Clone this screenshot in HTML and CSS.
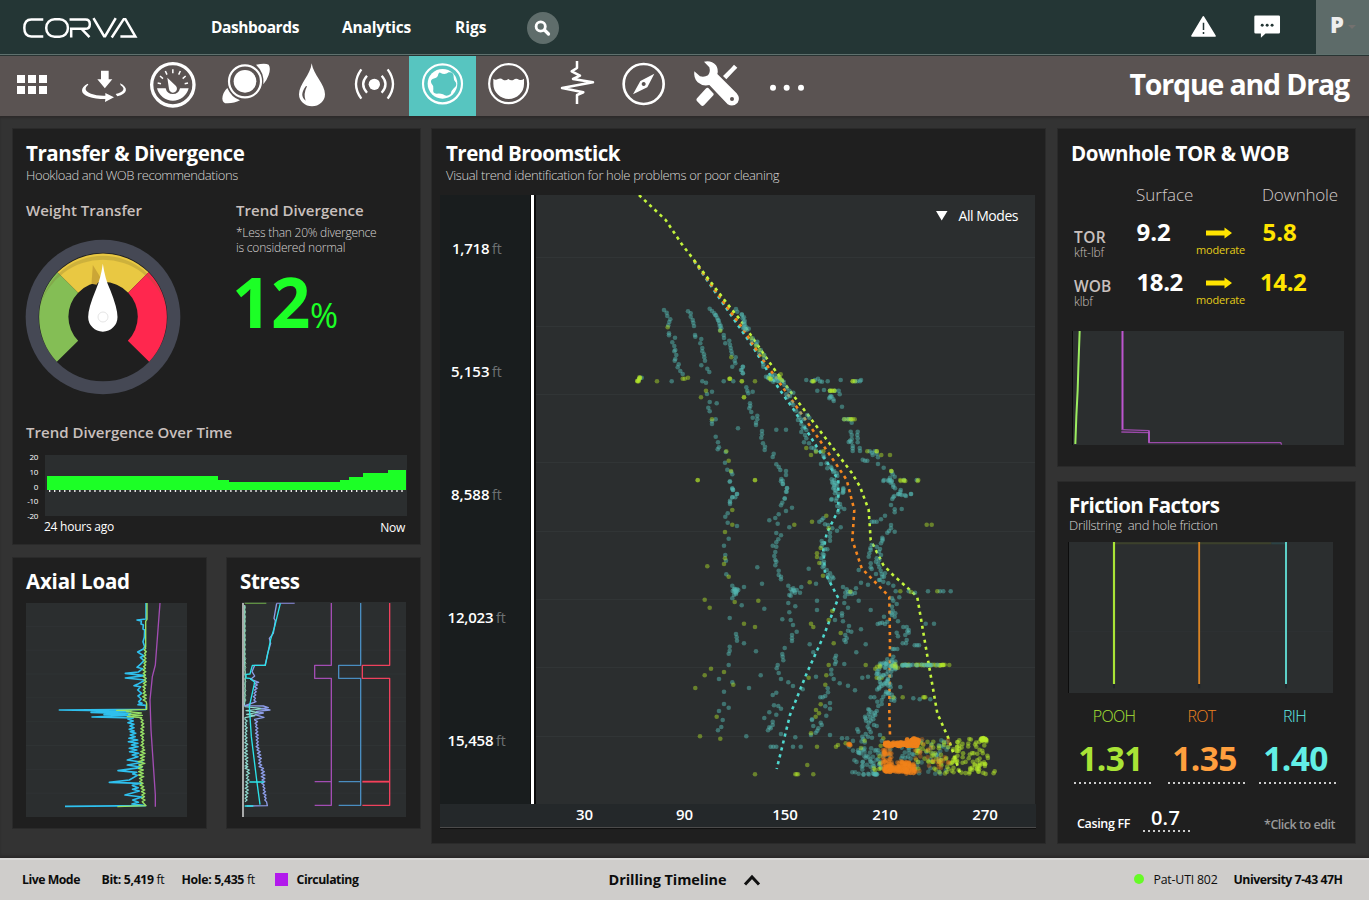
FILE: index.html
```html
<!DOCTYPE html>
<html lang="en">
<head>
<meta charset="utf-8">
<title>Corva – Torque and Drag</title>
<link rel="stylesheet" href="styles.css">
</head>
<body>
<header class="topbar">
  <svg class="logo" viewBox="66 48 352 68" role="img" aria-label="Corva" fill="none" stroke="#fff" stroke-width="7.500">
    <path d="M130 58H94Q73 58 73 83.500T94 109H130"/>
    <rect x="139" y="57" width="65" height="53" rx="25"/>
    <path d="M209 58H257Q270 58 270 72T257 86H214V112M246 87L269 111"/>
    <path d="M281 54L313 108H316L348 54"/>
    <path d="M336 112L372 57H377L407 109H362"/>
  </svg>
  <nav class="nav">
    <a class="n1">Dashboards</a><a class="n2">Analytics</a><a class="n3">Rigs</a>
  </nav>
  <span class="search"><svg viewBox="0 0 32 32"><circle cx="13.700" cy="14.500" r="4.600" fill="none" stroke="#fff" stroke-width="2.800"/><path d="M17.500 18L21.500 22" stroke="#fff" stroke-width="3.200" stroke-linecap="round"/></svg></span>
  <svg class="alert" viewBox="270 45 81 69"><path d="M310 51L345 108H276Z" fill="#fff" stroke="#fff" stroke-width="5" stroke-linejoin="round"/><path d="M310.500 68V90M310.500 96V102" stroke="#243635" stroke-width="4.500"/></svg>
  <svg class="chat" viewBox="460 42 85 75"><path d="M468 46H538Q542 46 542 50V97Q542 101 538 101H498L484 114V101H468Q464 101 464 97V50Q464 46 468 46Z" fill="#fff"/><g fill="#243635"><circle cx="488" cy="76" r="4.500"/><circle cx="503" cy="76" r="4.500"/><circle cx="518" cy="76" r="4.500"/></g></svg>
  <div class="user"><b>P</b><i></i></div>
</header>

<div class="toolbar">
  <svg width="68" viewBox="0 168 204 180" fill="#fff"><path d="M51 225h24v24h-24zM84 225h24v24h-24zM117 225h24v24h-24zM51 258h24v24h-24zM84 258h24v24h-24zM117 258h24v24h-24z"/></svg>
  <svg width="72" viewBox="204 168 216 180" fill="#fff"><path d="M303 212h23v26h11L314.500 265 292 238h11z"/><path d="M263 251C240 262 240 282 266 290Q285 297 316 297L315 306 342 292 316 279 316 287Q290 288 273 281C255 274 252 264 265 254Z"/><path d="M360 250C386 262 384 282 352 289L347 282C372 277 377 265 362 256Z"/></svg>
  <svg width="66" viewBox="420 168 198 180"><circle cx="518.500" cy="254.500" r="63.500" fill="none" stroke="#fff" stroke-width="10"/><path d="M471 265A49 49 0 0 0 566 265H540A22 22 0 0 1 497 265Z" fill="#fff"/><path d="M502 233L528 258A12 12 0 1 1 507 267Z" fill="#fff"/><g stroke="#fff" stroke-width="4.500"><path d="M518.500 208v12M496 213l5 11M541 213l-5 11M480 228l9 8M557 228l-9 8M473 249l10 2M564 249l-10 2"/></g></svg>
  <svg width="79" viewBox="618 168 237 180"><path d="M768 194Q796 188 806 194Q813 204 806 225Q800 242 790 253Q794 218 768 194Z" fill="#fff"/><path d="M682 264Q668 277 667 296Q668 311 683 310Q704 310 720 301Q694 292 682 264Z" fill="#fff"/><circle cx="735" cy="244" r="48" fill="none" stroke="#fff" stroke-width="6.500"/><circle cx="735" cy="244" r="34" fill="#fff"/></svg>
  <svg width="55" viewBox="855 168 165 180"><path d="M935 190C932 225 897 252 897 283A39 36 0 0 0 975 283C975 252 940 225 935 190Z" fill="#fff"/><path d="M918 258Q896 286 917 302Q909 283 921 259Z" fill="#5a5352"/></svg>
  <svg width="69" viewBox="1020 168 207 180" fill="none" stroke="#fff" stroke-width="7"><circle cx="1123" cy="253" r="17" fill="#fff" stroke="none"/><path d="M1101 227Q1078 252 1101 278M1145 227Q1168 252 1145 278M1084 208Q1052 252 1084 296M1163 208Q1195 252 1163 296"/></svg>
  <svg class="active" width="67" viewBox="27 18 201 180"><circle cx="127.500" cy="101.500" r="58.500" fill="none" stroke="#fff" stroke-width="6.500"/><circle cx="127.500" cy="101.500" r="44.500" fill="#fff"/><path d="M121 68Q134 76 146 67Q162 65 161 82Q160 91 168 98Q171 108 162 114Q154 121 152 132Q140 142 129 133Q120 129 110 131Q97 131 100 117Q102 108 94 100Q89 88 104 85Q113 83 115 72Q117 66 121 68Z" fill="#57c5c0"/></svg>
  <svg width="65" viewBox="228 18 195 180"><circle cx="326" cy="101" r="58.500" fill="none" stroke="#fff" stroke-width="6.500"/><path d="M280 86Q287 92 294 87Q302 83 309 89Q317 94 325 87Q333 93 341 89Q348 83 357 89Q365 92 372 86V101A46 46 0 0 1 280 101Z" fill="#fff"/></svg>
  <svg width="69" viewBox="423 18 207 180" fill="none" stroke="#fff" stroke-width="7.500" stroke-linejoin="round"><path d="M531 33V54L515 64L540 77L519 87L579 97L486 114L550 127L531 135V162"/></svg>
  <svg width="70" viewBox="630 18 210 180"><circle cx="731" cy="102" r="60" fill="none" stroke="#fff" stroke-width="8"/><path fill="#fff" fill-rule="evenodd" d="M763 71L742 112L699 133L721 93ZM731 96a6 6 0 1 0 .1 0Z"/></svg>
  <svg width="75" viewBox="840 18 225 180" fill="#fff"><path d="M912 35Q934 30 948 46Q956 58 952 72L1010 130Q1022 145 1013 158Q1000 172 983 163L928 105Q908 110 893 97Q880 84 883 64L900 79Q914 82 924 76Q932 66 928 52Z"/><circle cx="996" cy="147" r="6" fill="#5a5352"/><path d="M994 53L1002 44 1012 53 1003 62 979 88 969 78Z"/><path d="M925 114L941 131Q942 135 938 138L912 166Q907 170 903 166L890 152Q888 148 891 145L917 116Q921 112 925 114Z"/></svg>
  <svg width="65" viewBox="1065 18 195 180" fill="#fff"><circle cx="1119" cy="113" r="9"/><circle cx="1160" cy="113" r="9"/><circle cx="1203" cy="113" r="9"/></svg>
  <h1>Torque and Drag</h1>
</div>

<main class="board">
  <div class="col left">
    <section class="card transfer">
      <h2 class="t-transfer">Transfer &amp; Divergence</h2>
      <p class="sub s-hook">Hookload and WOB recommendations</p>
      <div class="split">
        <div class="weight">
          <h3>Weight Transfer</h3>
          <svg class="gauge" viewBox="77 358 467 468">
            <circle cx="310.500" cy="592" r="232" fill="#454854"/>
            <circle cx="310.500" cy="592" r="193" fill="#1f1f1f"/>
            <path d="M172 726A193 193 0 0 1 174 458L236 519A103 103 0 0 0 236 663Z" fill="#84be55"/>
            <path d="M174 458A193 193 0 0 1 447 458L386 519A103 103 0 0 0 236 519Z" fill="#e9c842"/>
            <path d="M447 458A193 193 0 0 1 449 726L385 663A103 103 0 0 0 386 519Z" fill="#ff274e"/>
            <path d="M122 560A193 193 0 0 1 499 560A197 197 0 0 0 122 560Z" fill="#7a6a2a" opacity=".25"/>
            <path d="M280 436L304 475 291 495 276 492Z" fill="#cba636"/>
            <path d="M310 432Q317 480 332 510Q354 565 354 592A44 44 0 0 1 266 592Q266 565 290 508Q304 475 310 432Z" fill="#fff"/>
            <circle cx="310.500" cy="592" r="15" fill="none" stroke="#e0e0e0" stroke-width="2.500"/>
          </svg>
        </div>
        <div class="diverge">
          <h3>Trend Divergence</h3>
          <p class="note"><span>*Less than 20% divergence</span><br>is considered normal</p>
          <div class="big">12<small>%</small></div>
        </div>
      </div>
      <h3 class="over">Trend Divergence Over Time</h3>
      <div class="history">
        <ul class="scale"><li>20</li><li>10</li><li>0</li><li>-10</li><li>-20</li></ul>
        <div>
          <svg class="area" viewBox="135 1005 1086 183" preserveAspectRatio="none">
            <rect x="135" y="1005" width="1086" height="183" fill="#2b2e2f"/>
            <path d="M141 1110V1068H654V1080H687V1086H1020V1080H1047V1071H1089V1059H1164V1050H1218V1110Z" fill="#1cff26"/>
            <path d="M147 1113H1218" stroke="#f2f2f2" stroke-width="6" stroke-dasharray="4 11.100"/>
          </svg>
          <div class="ends"><span>24 hours ago</span><span class="now">Now</span></div>
        </div>
      </div>
    </section>
    <div class="pair">
      <section class="card">
        <h2 class="t-axial">Axial Load</h2>
        <svg class="mini axial" id="axial" viewBox="78 159 483 642" fill="none" stroke-linejoin="round"></svg>
      </section>
      <section class="card">
        <h2 class="t-stress">Stress</h2>
        <svg class="mini stress" id="stress" viewBox="726 156 492 645" fill="none" stroke-linejoin="round"></svg>
      </section>
    </div>
  </div>

  <section class="card broom">
    <h2 class="t-broom">Trend Broomstick</h2>
    <p class="sub s-visual">Visual trend identification for hole problems or poor cleaning</p>
    <svg class="plot" viewBox="440 195 596 634">
      <rect x="440" y="195" width="90" height="609" fill="#191d1e"/>
      <rect x="530" y="195" width="505" height="609" fill="#2b2e2f"/>
      <rect x="440" y="804" width="596" height="23" fill="#24282a"/>
      <path d="M440 827.500H1036" stroke="#4c4b4b"/>
      <path d="M440 828.500H1036" stroke="#111"/>
      <path d="M536 257.500H1035M536 326.500H1035M536 394.500H1035M536 462.500H1035M536 531.500H1035M536 599.500H1035M536 667.500H1035M536 736.500H1035" stroke="#313536"/>
      <rect x="530" y="195" width="6" height="609" fill="#0a0a0a"/>
      <rect x="531" y="195" width="3" height="609" fill="#fff"/>
      <g fill="none" stroke-width="2.600" stroke-dasharray="3.200 3.900">
        <path stroke="#4fd8cf" d="M694 261L720 299 753 347 767 370 778.300 387.700 793.300 409 816.700 446.700 831.700 469.300 838.300 480V510L826.700 533.300 823.300 550 825 573 838.300 598 823.300 636.700 806.700 673.300 790 715 776.700 769"/>
        <path stroke="#f5861f" d="M694 260.500L727 307 742.700 328.300 760.700 356.700 781.700 385.700 809.300 425 836.700 465 846.700 480 854.300 510 852.300 540 861.700 568.300 889.300 596.700 890 643 889.300 710 890 735"/>
        <path stroke="#c3f53c" d="M639 195L665.700 220 681.700 244 694 260 727.700 304.300 741.700 321.700 768.300 360.700 784.300 383.300 809.300 416.700 830.700 445 851.700 472.700 860 486.700 868.700 510 870.700 540 883.300 565 893 575 913.300 593 917.300 597.300 928.300 661.700 937.300 713.300 948.300 738 960 773"/>
      </g>
      <g id="dots"></g>
      <g class="ylab"><text x="452" y="253.500" textLength="37.500">1,718</text><text x="451" y="376.500" textLength="38.500">5,153</text><text x="451" y="499.500" textLength="38.500">8,588</text><text x="447.500" y="622.500" textLength="46">12,023</text><text x="447.500" y="745.500" textLength="46">15,458</text></g>
      <g class="unit"><text x="492" y="253.500">ft</text><text x="492" y="376.500">ft</text><text x="492" y="499.500">ft</text><text x="496" y="622.500">ft</text><text x="496" y="745.500">ft</text></g>
      <g class="xlab"><text x="584.500" y="820">30</text><text x="684.500" y="820">90</text><text x="785" y="820">150</text><text x="885" y="820">210</text><text x="985" y="820">270</text></g>
      <path d="M936 211H947.500L941.700 220.500Z" fill="#fff"/>
      <text class="modes" x="958.500" y="220.700" textLength="60">All Modes</text>
    </svg>
  </section>

  <div class="col right">
    <section class="card downhole">
      <h2 class="t-down">Downhole TOR &amp; WOB</h2>
      <div class="row heads"><span></span><span>Surface</span><span></span><span class="dh">Downhole</span></div>
      <div class="row vals">
        <div class="lab">TOR<small>kft-lbf</small></div><strong>9.2</strong>
        <div class="trend"><svg viewBox="0 0 26 12"><path d="M0 3.500H18.500V.5L26 6 18.500 11.500V8.500H0Z" fill="#ffe400"/></svg>moderate</div><strong class="y">5.8</strong>
      </div>
      <div class="row vals wob">
        <div class="lab">WOB<small>klbf</small></div><strong>18.2</strong>
        <div class="trend"><svg viewBox="0 0 26 12"><path d="M0 3.500H18.500V.5L26 6 18.500 11.500V8.500H0Z" fill="#ffe400"/></svg>moderate</div><strong class="y y2">14.2</strong>
      </div>
      <svg class="torq" viewBox="66 633 816 342" fill="none">
        <rect x="66" y="633" width="816" height="342" fill="#2b2e2f"/>
        <path d="M67.500 633V975" stroke="#0c0c0c" stroke-width="3"/>
        <path d="M89 633L85 745 83 810 79 890 76 972" stroke="#9ced60" stroke-width="6"/>
        <path d="M217.500 633V929" stroke="#bd55cf" stroke-width="6"/>
        <path d="M215 929L297 932M214 936L297 938M297 930V968H692L695 974" stroke="#9a4aa9" stroke-width="4"/>
        <path d="M297 934V968" stroke="#b557c8" stroke-width="5"/>
      </svg>
    </section>
    <section class="card friction">
      <h2 class="t-fric">Friction Factors</h2>
      <p class="sub s-drill">Drillstring&nbsp; and hole friction</p>
      <svg class="ffs" viewBox="54 216 795 453" fill="none">
        <rect x="54" y="216" width="795" height="453" fill="#2b2e2f"/>
        <path d="M55.500 216V669" stroke="#0c0c0c" stroke-width="3"/>
        <path d="M194 220H664" stroke="#3c412b" stroke-width="6"/><path d="M664 220H706" stroke="#2c4244" stroke-width="6"/>
        <path d="M57 484H849" stroke="#2e3233" stroke-width="3"/>
        <path d="M192 216V642" stroke="#a9e436" stroke-width="6.500"/>
        <path d="M447.500 216V642" stroke="#d98324" stroke-width="5.500"/>
        <path d="M708 216V642" stroke="#5ccfc7" stroke-width="6"/>
        <path d="M192 642V655M447.500 642V655M708 642V655" stroke="#20252a" stroke-width="6"/>
      </svg>
      <div class="factors">
        <div class="ff pooh"><span>POOH</span><b>1.31</b></div>
        <div class="ff rot"><span>ROT</span><b>1.35</b></div>
        <div class="ff rih"><span>RIH</span><b>1.40</b></div>
      </div>
      <div class="casing"><span class="cf">Casing FF</span><b>0.7</b><span class="edit">*Click to edit</span></div>
    </section>
  </div>
</main>

<footer class="status">
  <b class="f1">Live Mode</b><span class="f2"><b>Bit: 5,419</b> ft</span><span class="f3"><b>Hole: 5,435</b> ft</span>
  <i class="sq"></i><b class="f4">Circulating</b>
  <b class="tl">Drilling Timeline</b>
  <svg class="chev" viewBox="0 0 18 12"><path d="M2 10.500L9 3L16 10.500" fill="none" stroke="#111" stroke-width="3"/></svg>
  <i class="dot"></i><span class="rig">Pat-UTI 802</span><b class="uni">University 7-43 47H</b>
</footer>
<script src="charts.js"></script>
</body>
</html>
```
FILE: styles.css
```css
*{box-sizing:border-box;margin:0;padding:0}
body{width:1369px;height:900px;overflow:hidden;background:#333;color:#fff;font-family:"Open Sans","Noto Sans",sans-serif;display:flex;flex-direction:column;white-space:nowrap}
svg{display:block;flex:none}
b,strong,h3{font-weight:600}
h1,h2{font-weight:700}
i{font-style:normal}

.topbar{height:56px;flex:none;background:#243635;border-bottom:1px solid #293433;box-shadow:inset 0 -1px #5f716e;display:flex;align-items:center;padding-left:22px}
.logo{width:117px;height:23px}
.nav{display:flex;margin-left:72px;font-size:15.500px;font-weight:700;line-height:54px;padding-bottom:2px}
.n1{width:131px;letter-spacing:-.41px}
.n2{width:113px;letter-spacing:-.2px}
.n3{width:72px}
.search{width:32px;height:32px;border-radius:50%;background:#5f6d6b}
.alert{width:27px;height:23px;margin:0 0 3px 631px}
.chat{width:28px;height:25px;margin:0 0 2px 36px}
.user{width:53px;height:54px;margin:0 0 2px auto;background:#5d6b69;display:flex;align-items:center;padding:0 0 5px 14px;gap:4px}
.user b{font-weight:800;font-size:22px;color:#eee}
.user i{border:4px solid transparent;border-top-color:#73716f;border-bottom:0;margin-top:6px}

.toolbar{height:60px;flex:none;background:#5a5352;display:flex;align-items:center}
.toolbar svg{height:60px}
.toolbar .active{background:#57c5c0}
h1{margin:0 20px 0 auto;font-size:28.500px;line-height:56px;padding-bottom:4px;letter-spacing:-1.150px}

.board{height:742px;flex:none;display:flex;padding:12px 13px 0 12px;box-shadow:inset 0 2px 2px #2d2b2b}
.card{background:#1f1f1f;outline:1px solid #2a2a2a;outline-offset:-1px}
h2{font-size:20.500px;line-height:26px}
.sub{font-size:13px;font-weight:300;line-height:16px;color:#d8d6d4}
h3{font-size:15px;line-height:20px;color:#c9c0be;letter-spacing:.02px}

.left{width:409px}
.transfer{height:417px;padding:12px 14px 0}
.t-transfer{letter-spacing:-.41px}
.s-hook{margin-top:1px;letter-spacing:-.42px}
.split{display:flex;margin-top:17px}
.weight{width:210px}
.gauge{width:156px;height:156px;margin:19px 0 0 -.7px}
.note{margin-top:6px;font-size:12px;font-weight:300;line-height:14.500px;color:#d8d4d3;letter-spacing:-.2px}
.note span{letter-spacing:-.25px}
.big{margin:11px 0 0 -4px;font-size:69px;font-weight:700;line-height:70px;color:#1cff26;letter-spacing:-.5px}
.big small{display:inline-block;font-size:34px;font-weight:500;letter-spacing:0;line-height:34px}
.over{margin-top:27px}
.history{display:flex;margin-top:8px}
.scale{list-style:none;width:19px;height:76px;padding-right:7px;font-size:8px;line-height:14.800px;direction:rtl;letter-spacing:-.3px}
.scale li{direction:ltr;text-align:right}
.area{width:362px;height:61px;margin-top:5px}
.ends{display:flex;justify-content:space-between;padding:3px 2px 0 0;margin-left:-1px;font-size:12px;line-height:16px;letter-spacing:-.25px}
.now{padding-top:1px}
.pair{display:flex;gap:19px;margin-top:12px}
.pair .card{width:195px;height:272px;padding:11px 14px 0}
.t-axial{letter-spacing:-.2px}
.t-stress{letter-spacing:-.4px}
.mini{background:#2b2e2f}
.axial{width:161px;height:214px;margin-top:9px}
.stress{width:164px;height:215px;margin:8px 0 0 2px}

.broom{width:615px;height:716px;margin:0 11px 0 10px;padding:12px 9px 0}
.broom h2,.broom .sub{margin-left:6px}
.t-broom{letter-spacing:-.52px}
.broom .s-visual{margin-top:1px;letter-spacing:-.35px}
.plot{width:596px;height:634px;margin-top:12px}
.ylab,.xlab{font-size:15px;font-weight:600;fill:#fff}
.xlab{text-anchor:middle}
.unit{font-size:14px;fill:#6d7173}
.modes{font-size:14px;fill:#fff}

.right{width:299px}
.downhole{height:339px;padding:12px 0 0 14px}
.t-down{letter-spacing:-.47px}
.row{display:grid;grid-template-columns:62px 60px 66px auto;margin-left:3px}
.heads{margin-top:18px;font-size:17px;font-weight:300;line-height:22px;color:#d3cbc9}
.heads .dh{letter-spacing:-.2px}
.vals{margin-top:11px;height:39px}
.vals strong{font-size:24px;font-weight:700;line-height:30px;letter-spacing:0;margin-left:.5px}
.vals .y{color:#ffe400}
.vals .y2{margin-left:-2px}
.wob strong{letter-spacing:-.4px}
.lab{padding-top:11px;font-size:15.500px;font-weight:600;line-height:18px;color:#c9c0be;letter-spacing:.4px}
.wob .lab{padding-top:10px;letter-spacing:.1px}
.lab small{display:block;font-size:12px;font-weight:300;line-height:14px;letter-spacing:-.1px}
.trend{font-size:11px;line-height:14px;color:#e3cc18;letter-spacing:-.16px}
.trend svg{width:26px;height:12px;margin:10px 0 4px 10px}
.torq{width:272px;height:114px;margin:25px 0 0 1px}
.friction{height:363px;margin-top:14px;padding:11px 0 0 12px}
.t-fric{letter-spacing:-.55px}
.friction .sub{margin-top:-1px;letter-spacing:-.3px}
.ffs{width:265px;height:151px;margin:9px 0 0 -1px}
.factors{display:flex;margin:13px 0 0 5px}
.ff{text-align:center;background:repeating-linear-gradient(90deg,#ccc 0 2px,transparent 2px 5px) 0 100%/77px 2px no-repeat;width:77px;height:78px}
.ff span{display:block;font-size:16px;font-weight:300;line-height:20px;letter-spacing:-.7px}
.ff b{display:block;font-size:33.500px;font-weight:700;line-height:40px;margin:12px 0 0 -4px;letter-spacing:-.6px}
.pooh{color:#a9e436}
.pooh span{padding-left:3px}
.rot{color:#ff9f3e;margin-left:17px}
.rot span{color:#f08421;padding-right:10px}
.rih{color:#62efe6;margin-left:14px}
.rih span{padding-right:6px}
.casing{display:flex;align-items:flex-start;font-size:12.500px;line-height:18px;padding-left:8px;margin-top:22px}
.cf{width:66px;margin-top:9px;font-weight:600;letter-spacing:-.35px}
.casing b{width:47px;height:26px;font-size:20px;line-height:24px;text-align:center;letter-spacing:.3px;padding-right:2px;background:repeating-linear-gradient(90deg,#ccc 0 2px,transparent 2px 5px) 0 100%/47px 2px no-repeat}
.edit{margin:10px 0 0 74px;color:#999;font-weight:600;letter-spacing:-.47px}

.status{height:42px;background:#cfcdcb;border-top:2px solid #dad9d8;box-shadow:0 -2px 2px #2a2828;color:#0c0c0c;display:flex;align-items:center;padding:0 0 2px 22px;font-size:12.300px}
.status b{font-weight:700}
.f1{width:79.500px;letter-spacing:-.5px}
.f2{width:80px;letter-spacing:-.35px}
.f3{width:93px;letter-spacing:-.35px}
.sq{width:13px;height:13px;background:#b219ec}
.f4{width:312px;margin-left:9px;letter-spacing:-.45px}
.tl{width:134px;font-size:14.500px;letter-spacing:-.06px}
.chev{width:18px;height:12px;margin-top:2px}
.dot{width:10px;height:10px;border-radius:50%;background:#66fb26;margin-left:373px}
.rig{width:80px;margin-left:10px;letter-spacing:-.18px}
.uni{letter-spacing:-.48px}
```
FILE: charts.js
```js
const NS = 'http://www.w3.org/2000/svg';

// Small seeded generator so every load draws the same points.
let seed = 7;
const rnd = () => (seed = (seed * 16807) % 2147483647) / 2147483647;

function add(parent, tag, attrs) {
  const el = document.createElementNS(NS, tag);
  for (const k in attrs) el.setAttribute(k, attrs[k]);
  parent.appendChild(el);
}

/* ---- Trend broomstick samples: points in thirds of a pixel from an origin ---- */
const dots = document.getElementById('dots');
const TEAL = '#54b8b2', LIME = '#b6e92a', ORANGE = '#f0821a';

function dot(x, y, fill, o) { add(dots, 'circle', { cx: x.toFixed(1), cy: y.toFixed(1), r: 2.3, fill, 'fill-opacity': o }); }
function plot(ox, oy, fill, list) {
  for (const p of list.trim().split(/\s+/)) {
    const [x, y] = p.split(',').map(Number);
    dot(ox + x / 3, oy + y / 3, fill, fill === LIME ? .45 : .5);
  }
}
function cloud(n, x0, x1, y0, y1, fill, o = .5) {
  for (let i = 0; i < n; i++) dot(x0 + rnd() * (x1 - x0), y0 + rnd() * (y1 - y0), fill, o);
}

plot(430, 120, TEAL, `702,570 710,578 712,588 721,598 718,606 715,616 717,640 717,646 735,653 727,667 733,678 736,690 733,694 739,705 736,717 734,722 746,733 743,742 751,753 758,762
774,574 782,580 782,590 788,600 790,608 792,618 795,645 796,650 814,657 811,670 817,684 817,694 822,703 823,712 825,722 814,736 832,746 838,756
839,566 846,573 853,580 858,586 862,594 866,602 868,610 872,617 874,625 856,586 864,600 869,618 870,630 881,645 882,654 898,662 886,670 900,674 902,684 904,694 906,703 917,712 914,722 916,730 907,740
918,567 922,575 936,584 938,595 941,605 943,615 945,627 942,622 950,630 939,740 933,750 939,760 725,784 817,784 828,788 881,784 910,784 635,773 628,776 846,815 831,822 839,846 860,850 835,863 839,874 857,898 846,904 846,912 924,925 857,950 864,967 867,982 863,988 887,996 885,1028 892,1049 904,1056 907,1063 900,1084 907,1106 909,1110 921,1122 907,1132`);
plot(430, 120, LIME, `713,622 871,632 904,712 630,773 630,773 628,776 626,780 624,784 626,784 622,784 622,782 628,772 681,784 758,776 764,776 774,773 900,776 900,776 898,776 936,784 828,812 813,832 942,832 846,898 889,994 896,1022 903,1053 803,1080`);
plot(740, 120, TEAL, `8,740 5,750 8,760 19,802 22,812 38,815 25,820 30,850 31,858 28,865 34,876 38,893 52,887 52,898 48,908 48,915 66,933 66,943 64,953 69,970 75,980 74,990 101,1001 98,1011 109,1033 116,1041 121,1050 138,1053 138,1065 124,1077 128,1082 128,1092 141,1105 138,1115 134,1135 109,929 138,929
5,583 12,592 14,603 14,612 19,622 26,626 10,625 38,655 52,665 50,675 36,662 48,672 62,690 58,700 73,705 73,715 70,740 70,733 78,770 84,772 88,768 96,770 104,765 108,775 115,772 121,778 126,782 131,785 92,780 100,785 85,775 112,783 96,768 104,780 116,783 133,795 141,805 148,812 160,818 139,823 142,832 150,828 155,848 160,855 168,872 180,880 178,892 174,900 193,897 202,885 208,893 184,900 184,912 193,920 199,930 188,925 184,936 195,945 199,955 192,967 207,970 214,983 222,985 228,992 242,995 250,1005 243,1032 252,1012 260,1030 262,1045 275,1045 272,1040 283,1053 290,1060 292,1068 280,1056 275,1078 278,1090 283,1080 290,1090 283,1100 285,1110 285,1120 310,1108 310,1117 290,1135 275,1137
199,780 215,784 225,780 234,776 240,784 246,785 263,784 302,780 345,784 352,784 360,784 363,780 232,812 252,810 270,812 285,812 296,812 299,823 268,835 275,830 280,838 281,843 272,828 270,832 306,860 312,898 320,898 330,898 326,898 335,908 332,935 353,935 352,945 335,945 353,955 335,957 326,966 334,967 330,962 353,967 338,978 359,984 338,985 338,993 360,993 389,994 396,998 404,994 410,1001 398,1005 414,1012 368,1019 375,1022 382,1022 414,1032 431,1043 464,1070 458,1063 450,1073 455,1055 432,1080 445,1080 455,1082 450,1080 452,1088 460,1100 492,1080 530,1080 481,1115 475,1123 480,1123 495,1126 513,1122 463,1128 457,1137`);
plot(740, 120, LIME, `5,784 45,784 12,832 218,784 218,784 222,784 338,784 338,784 345,784 270,812 276,812 276,812 283,812 283,812 270,812 313,898 325,898 333,898 333,898 338,898 344,898 382,994 410,994 410,994 424,1005 450,1005 454,1053 454,1053 481,1080 492,1080 535,1080 199,984 213,1005 228,995 250,994 45,1080 122,763 92,778 92,776 120,775 118,770 88,774 125,780 34,655 48,678 58,690 70,706`);
plot(600, 480, TEAL, `389,5 397,25 399,30 411,42 397,52 406,52 390,62 390,72 390,67 383,100 376,110 383,128 411,138 386,176 372,197 376,225 378,242 379,283 397,317 404,326 407,335 411,328 403,335 408,342 398,333 411,334 406,330 402,328 415,330 408,338 397,355 402,345 432,321 425,376 389,414 408,462 410,472 411,482 432,490 389,500 389,512 386,521 386,555 357,597 397,607 447,624 372,635 372,672 386,683 357,693 368,720 364,741 354,751 439,769 468,514 482,586 472,262 486,311 493,386
543,4 549,12 561,24 560,35 554,56 547,68 543,76 576,83 558,93 536,103 526,114 508,121 533,131 568,142 529,159 543,166 535,178 529,187 518,197 529,200 526,216 523,228 526,240 529,245 526,256 536,272 536,285 543,290 543,298 565,317 572,328 580,325 583,332 590,330 576,335 585,338 600,338 572,347 604,321 580,330 568,345 565,369 586,379 568,397 547,418 572,420 579,435 590,455 576,465 576,475 576,483 554,504 547,522 548,530 550,541 533,555 530,565 536,579 543,597 565,607 579,618 608,628 529,638 518,645 522,676 535,678 543,686 508,697 529,704 493,714 518,725 518,735 508,742 512,745 504,751 543,762 586,772 512,800 520,800 529,800 579,800 602,800
697,5 705,8 710,18 700,25 708,32 703,15 715,42 730,25 728,38 730,32 694,59 708,62 720,72 722,82 712,78 733,87 715,97 670,115 665,120 658,125 675,133 684,135 722,142 711,152 697,145 690,158 690,170 690,182 665,183 672,190 665,198 675,208 682,208 668,190 668,222 664,235 672,225 672,245 672,258 668,262 665,250 680,270 690,280 697,290 686,292 690,302 700,295 683,285 626,266 648,311 729,321 740,328 752,335 736,338 745,342 735,350 756,342 745,335 768,325 783,308 765,339 651,362 651,390 733,369 744,383 776,362 776,270 812,390 726,400 726,407 705,420 729,424 747,438 744,452 754,455 783,448 736,465 740,475 733,480 737,486 629,493 797,493 640,517 769,517 708,527 705,535 708,545 705,552 733,552 694,569 694,583 648,590 701,597 719,610 744,617 765,631 683,625 684,637 676,648 661,652 668,652 690,669 690,686 676,679 679,707 636,718 662,728 665,735 640,738 655,745 652,752 647,758 633,765 690,765 726,775 636,720
850,3 865,3 875,5 880,15 885,25 902,30 895,42 905,45 918,48 933,42 880,52 873,75 884,88 884,97 905,87 855,107 843,118 815,125 830,125 822,125 873,135 873,145 884,155 862,158 867,153 847,173 847,182 843,190 848,178 815,195 811,205 808,220 806,230 812,210 812,250 812,262 815,267 830,200 837,215 840,207 843,225 830,235 828,245 835,252 838,240 838,262 842,272 828,282 845,282 855,280 847,290 840,300 850,305 865,310 837,300 852,290 880,317 804,314 887,334 926,334 945,338 984,334 1020,334 1030,334 1052,334
876,355 898,352 880,362 890,372 876,380 878,392 886,400 876,405 884,410 874,400 852,410 894,424 862,425 855,432 847,428 840,430 833,432 977,431 1002,431 910,441 920,441 926,450 926,458 922,454 916,465 890,458 894,469 920,480 918,490 908,490 944,496 951,496 957,496 883,507 892,507 878,507 880,530 876,540 862,538 787,593 804,590 901,621 812,652 823,652 940,655 959,658 991,658 883,655 883,662 874,660 850,650 845,660
787,770 775,755 772,748 790,777 808,748 822,735 830,738 812,757 797,762 804,770 816,773 840,765 830,693 826,705 820,718 808,690 806,702 795,710 798,722 806,728 820,707 814,697 835,678 845,672 832,665 805,688 812,722 803,740 825,698 810,712 797,715`);
plot(600, 480, LIME, `293,1 465,1 397,90 397,134 375,156 375,235 372,252 322,259 386,290 314,359 404,366 329,383 432,431 465,441 475,362 333,566 372,576 314,586 286,624 400,614 350,710 300,769 361,776 465,883 583,134 636,125 679,107 686,145 662,204 651,220 651,231 658,249 669,287 629,307 633,431 640,441 697,393 686,420 722,459 701,490 686,555 679,586 626,593 676,614 797,555 826,566 751,335 662,673 648,690 657,700 647,710 633,760 651,800 714,795 708,800 737,790 622,855 590,883 586,883 594,883 640,883 980,134 995,134 901,334 1012,334 933,336 850,775 902,3 912,3 916,3 953,3 908,652 970,652 976,652 973,652 880,652 1048,555 1030,555 1030,555 1028,555 845,593 830,593 837,595`);
cloud(26, 879, 897, 661, 670, TEAL);
cloud(26, 902, 945, 664.500, 665.500, LIME, .42);
cloud(18, 902, 942, 664.500, 665.500, TEAL);
cloud(8, 874, 898, 664, 668, LIME, .4);
cloud(34, 876, 892, 671, 695, TEAL);
cloud(26, 847, 882, 738, 775, TEAL, .45);
cloud(30, 853, 882, 748, 768, TEAL, .45);
cloud(16, 882, 915, 746, 762, TEAL, .45);
cloud(36, 915, 948, 740, 775, TEAL, .4);
cloud(12, 858, 880, 773.500, 774.500, TEAL, .45);
cloud(9, 860, 884, 740, 775, LIME, .45);
cloud(8, 847, 852, 743, 746, ORANGE, .4);
cloud(62, 914, 958, 741, 774, LIME, .45);
cloud(66, 953, 988, 739, 774, LIME, .5);
cloud(10, 968, 996, 766, 774, LIME, .5);
cloud(12, 981, 987, 738, 741, LIME, .7);
cloud(28, 915, 950, 738, 774, ORANGE, .35);
cloud(150, 885, 918, 742.500, 746, ORANGE, .6);
cloud(60, 907, 919, 738.500, 746, ORANGE, .7);
cloud(34, 883, 892, 746, 765, ORANGE, .5);
cloud(110, 884, 907, 766, 772, ORANGE, .55);
cloud(40, 896, 912, 761, 768, ORANGE, .5);
cloud(34, 904, 915, 764, 774, ORANGE, .5);

/* ---- Axial load ---- */
const axial = document.getElementById('axial');
function grid(svg, x0, x1) {
  for (let y = 229; y < 780; y += 71.500) add(svg, 'path', { d: `M${x0} ${y}H${x1}`, stroke: '#2f3334', 'stroke-width': 3 });
}
// Jagged trace through [y, x, amplitude] knots.
function trace(knots, step) {
  let d = '', flip = 1;
  for (let i = 0; i < knots.length - 1; i++) {
    const [ya, xa, aa] = knots[i], [yb, xb, ab] = knots[i + 1];
    for (let y = ya; y < yb; y += step) {
      const t = (y - ya) / (yb - ya), a = aa + (ab - aa) * t;
      flip = -flip;
      const x = xa + (xb - xa) * t + (flip * (.35 + rnd() * .65)) * a;
      d += `${d ? 'L' : 'M'}${x.toFixed(1)} ${y.toFixed(1)}`;
    }
  }
  return d;
}
grid(axial, 78, 561);
add(axial, 'path', { d: 'M480 159L466 345 457 380 450 450 453 540 466 735V770', stroke: '#a24db3', 'stroke-width': 4 });
add(axial, 'path', { d: 'M438 159V207L411 210 424 213 423 222 430 225 429 237 434 240 433 262 429 275 434 290 430 297 413 306 432 318 421 322 432 332 421 343 411 352 428 356 415 366 376 370 435 377 376 384 436 390 412 403 402 407 422 410 413 420 425 430 414 438 424 447 416 455 426 460 414 464 438 466V478L178 480 268 481 385 485 273 487 392 491 312 494 390 496 276 501 400 504 384 507' + trace([[508, 392, 8], [545, 395, 12], [590, 402, 16], [622, 402, 14]], 5).replace('M', 'L') + 'L382 630 428 637 382 645 425 652 354 662 410 667 398 672 412 676 388 690 328 697 425 700 397 706' + trace([[708, 408, 10], [728, 408, 12]], 5).replace('M', 'L') + 'L375 735 426 741 398 750 415 757 396 762 436 767 195 769', stroke: '#2fc0ee', 'stroke-width': 4.8 });
add(axial, 'path', { d: 'M441 159V208L437 214V290' + trace([[290, 436, 3], [345, 434, 5], [380, 434, 6], [460, 433, 6]], 5).replace('M', 'L') + 'L440 462V478L350 481 395 482 380 485 424 489 386 493 427 496 382 500 425 503' + trace([[506, 426, 5], [600, 429, 7], [640, 424, 11], [690, 422, 10], [720, 428, 7], [760, 431, 7]], 5).replace('M', 'L') + 'L438 767 352 770', stroke: '#96e065', 'stroke-width': 4.2 });

/* ---- Stress ---- */
const stress = document.getElementById('stress');
grid(stress, 732, 1218);
add(stress, 'path', { d: 'M729 159V801', stroke: '#a9abab', 'stroke-width': 6 });
add(stress, 'path', { d: 'M734 160H799', stroke: '#5f8f43', 'stroke-width': 4 });
add(stress, 'path', { d: 'M830 160H884', stroke: '#7575b5', 'stroke-width': 4 });
add(stress, 'path', { d: 'M994 159V346H944V385H994V766H944M944 695H994', stroke: '#a24db3', 'stroke-width': 4 });
add(stress, 'path', { d: 'M1082 159V346H1016V385H1082V766H1016M1016 695H1082', stroke: '#4a8dc0', 'stroke-width': 4 });
add(stress, 'path', { d: 'M1169 159V346H1087V385H1169V766H1087', stroke: '#ee415d', 'stroke-width': 4 });
add(stress, 'path', { d: 'M1087 695H1169', stroke: '#f5405a', 'stroke-width': 5.5 });
add(stress, 'path', { d: 'M734 165V345L736 375 734 460' + trace([[462, 736, 3], [466, 738, 3]], 4).replace('M', 'L') + 'L735 470 790 476 738 482 775 487 740 493 765 497 735 503' + trace([[508, 738, 4], [650, 739, 6], [665, 744, 7], [760, 738, 4]], 5).replace('M', 'L'), stroke: '#8ed8cd', 'stroke-width': 3.5 });
add(stress, 'path', { d: trace([[165, 735, 2], [345, 735, 3], [462, 736, 4]], 7), stroke: '#8ec9a5', 'stroke-width': 3 });
add(stress, 'path', { d: 'M830 160L822 205 826 212 820 250 808 265 812 280 803 310 800 325 795 346H764L756 365 764 378 752 388 776 397' + trace([[400, 768, 5], [460, 763, 5]], 5).replace('M', 'L') + 'L735 467 790 468 805 473 784 476 810 480 770 484 790 489 765 494 792 502 764 508' + trace([[510, 768, 5], [590, 773, 5], [650, 783, 6], [665, 790, 7], [700, 790, 5], [760, 798, 5]], 5).replace('M', 'L') + 'L802 767 740 768', stroke: '#8c9ce6', 'stroke-width': 4 });
add(stress, 'path', { d: 'M841 160L824 230 812 268 796 346H757L750 372 738 373V384L750 385 764 397 748 470 754 560 770 690 780 764M748 696H792M734 768H760', stroke: '#2ce3ea', 'stroke-width': 4 });
```
